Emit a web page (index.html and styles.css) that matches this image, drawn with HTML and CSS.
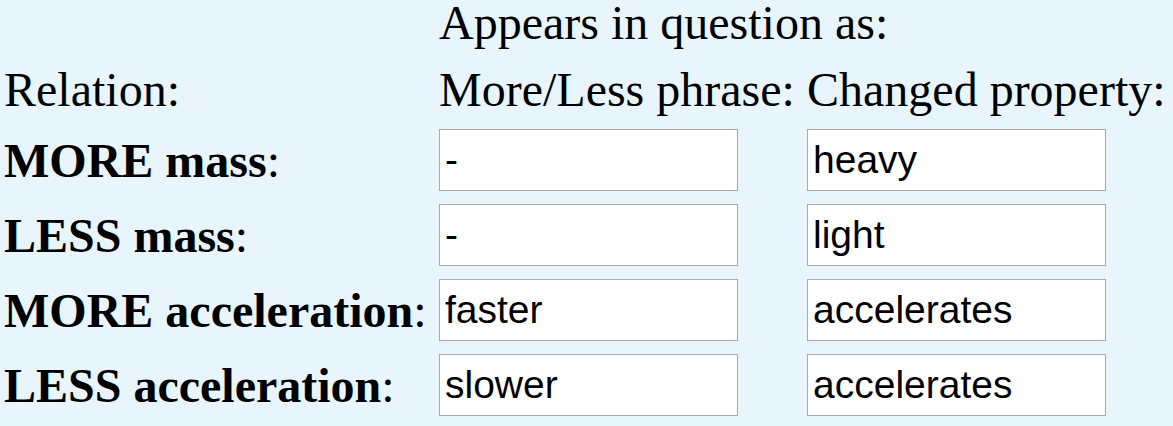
FILE: index.html
```html
<!DOCTYPE html>
<html lang="en">
<head>
<meta charset="utf-8">
<title>Relations</title>
<link rel="stylesheet" href="styles.css">
</head>
<body>
<div class="table">
  <div class="head top empty"></div>
  <div class="head top span">Appears in question as:</div>

  <div class="head">Relation:</div>
  <div class="head">More/Less phrase:</div>
  <div class="head">Changed property:</div>

  <div class="label"><b>MORE mass</b>:</div>
  <div class="cell"><input class="field" type="text" value="-" readonly></div>
  <div class="cell"><input class="field" type="text" value="heavy" readonly></div>

  <div class="label"><b>LESS mass</b>:</div>
  <div class="cell"><input class="field" type="text" value="-" readonly></div>
  <div class="cell"><input class="field" type="text" value="light" readonly></div>

  <div class="label"><b>MORE acceleration</b>:</div>
  <div class="cell"><input class="field" type="text" value="faster" readonly></div>
  <div class="cell"><input class="field" type="text" value="accelerates" readonly></div>

  <div class="label"><b>LESS acceleration</b>:</div>
  <div class="cell"><input class="field" type="text" value="slower" readonly></div>
  <div class="cell"><input class="field" type="text" value="accelerates" readonly></div>
</div>
</body>
</html>
```

FILE: styles.css
```css
html, body {
  margin: 0;
  padding: 0;
  background: #e8f5fd;
}

body {
  font-family: "Liberation Serif", "Times New Roman", serif;
  font-size: 48px;
  color: #000;
  overflow: hidden;
}

.table {
  display: grid;
  grid-template-columns: 435px 368px 1fr;
  grid-template-rows: 50px 53px 62px 62px 62px 62px;
  row-gap: 13px;
  padding-left: 4px;
}

.head {
  line-height: 53px;
  white-space: nowrap;
}

.head.top {
  line-height: 46px;
}

.span {
  grid-column: 2 / 4;
}

.label {
  display: flex;
  align-items: center;
  line-height: 53px;
  white-space: nowrap;
}

.label b {
  font-weight: bold;
}

.cell {
  display: flex;
  align-items: center;
}

.field {
  box-sizing: border-box;
  width: 299px;
  height: 62px;
  margin: 0;
  padding: 0 4px 0 5px;
  border: 1px solid #a9a9a9;
  background: #fff;
  font-family: "Liberation Sans", Arial, sans-serif;
  font-size: 39px;
  color: #000;
  outline: none;
}
```
